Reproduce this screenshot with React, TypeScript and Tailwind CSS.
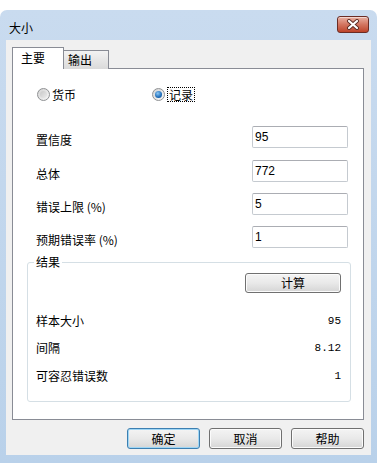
import React from 'react';

const cjk = "font-['Noto_Sans_CJK_SC','Noto_Sans_CJK_JP',sans-serif]";

function CloseButton() {
  return (
    <div className="mr-[2px] mt-[-2px] flex h-[17px] w-[32px] items-center justify-center rounded-[3px] border border-[#6b2c24] bg-gradient-to-b from-[#e8b0a2] via-[#d37560] to-[#bd4329] shadow-[inset_0_1px_0_rgba(255,255,255,0.5)]">
      <svg width="14" height="11" viewBox="0 0 14 11">
        <path d="M3 2 L11 9 M11 2 L3 9" stroke="#5a2a22" strokeWidth="4" strokeLinecap="round" />
        <path d="M3 2 L11 9 M11 2 L3 9" stroke="#ffffff" strokeWidth="2.2" strokeLinecap="round" />
      </svg>
    </div>
  );
}

function Radio({ checked }: { checked?: boolean }) {
  return (
    <div className="flex h-[13px] w-[13px] items-center justify-center rounded-full border border-[#8f9193] bg-gradient-to-br from-[#d4d4d4] to-[#f7f7f7]">
      {checked ? (
        <div className="h-[7px] w-[7px] rounded-full bg-[radial-gradient(circle_at_40%_35%,#8cc8f5,#1e6cb8_60%,#124a86)]" />
      ) : (
        <div className="h-[7px] w-[7px] rounded-full bg-gradient-to-br from-[#c8c8c8] to-[#ececec]" />
      )}
    </div>
  );
}

function Field({ label, value, className }: { label: string; value: string; className?: string }) {
  return (
    <div className={`flex h-[22px] items-start ${className ?? ''}`}>
      <span className="mt-[6px] w-[216px] leading-[16px]">{label}</span>
      <div className="flex h-[22px] w-[96px] items-center rounded-[2px] border border-[#c5cad0] border-t-[#abadb3] bg-white pl-[2px] font-['Liberation_Sans',sans-serif] text-[12px]">
        {value}
      </div>
    </div>
  );
}

function Button({ label, primary, className }: { label: string; primary?: boolean; className?: string }) {
  return (
    <div
      className={`flex items-center justify-center rounded-[3px] border bg-gradient-to-b from-[#f4f4f4] via-[#e9e9e9] to-[#d5d5d5] ${
        primary ? 'border-[#3c7fb1] shadow-[inset_0_0_0_1px_#9fd6f5]' : 'border-[#707070] shadow-[inset_0_0_0_1px_#fbfbfb]'
      } ${className ?? ''}`}
    >
      {label}
    </div>
  );
}

function ResultRow({ label, value, className }: { label: string; value: string; className?: string }) {
  return (
    <div className={`flex h-[16px] items-center justify-between leading-[16px] ${className ?? ''}`}>
      <span>{label}</span>
      <span className="font-['Liberation_Mono',monospace] text-[11px]">{value}</span>
    </div>
  );
}

export default function App() {
  return (
    <div className={`h-[463px] w-[377px] bg-white pt-[10px] text-[12px] text-black ${cjk}`}>
      <div className="flex h-[453px] flex-col rounded-t-[7px] bg-gradient-to-b from-[#c9dbef] to-[#b9d1ea] px-[6px] pb-[8px]">
        {/* title bar */}
        <div className="flex h-[30px] items-center justify-between">
          <span className="ml-[3px] mt-[5px] leading-[14px]">大小</span>
          <CloseButton />
        </div>

        {/* client area */}
        <div className="flex flex-1 flex-col bg-[#f0f0f0]">
          {/* tabs */}
          <div className="relative z-10 mb-[-1px] ml-[6px] mt-[7px] flex h-[22px] items-end">
            <div className="h-[22px] w-[52px] border border-b-0 border-[#898c95] bg-white pl-[8px] pt-[2px] leading-[16px]">
              主要
            </div>
            <div className="h-[19px] w-[45px] border border-b-0 border-l-0 border-[#898c95] bg-gradient-to-b from-[#f3f3f3] to-[#dadada] pl-[4px] leading-[17px]">
              输出
            </div>
          </div>

          {/* tab panel */}
          <div className="ml-[6px] flex h-[352px] w-[352px] flex-col border border-[#898c95] bg-white">
            <div className="ml-[24px] mt-[18px] flex h-[15px] items-center">
              <div className="flex w-[115px] items-center gap-[2px]">
                <Radio />
                <span className="leading-[15px]">货币</span>
              </div>
              <div className="flex items-center gap-[2px]">
                <Radio checked />
                <span className="border border-dotted border-black px-[1px] leading-[13px]">记录</span>
              </div>
            </div>

            <div className="ml-[23px] mt-[24px] flex flex-col">
              <Field label="置信度" value="95" />
              <Field label="总体" value="772" className="mt-[12px]" />
              <Field label="错误上限 (%)" value="5" className="mt-[11px]" />
              <Field label="预期错误率 (%)" value="1" className="mt-[11px]" />
            </div>

            <fieldset className="ml-[14px] mr-[12px] mt-[6px] rounded-[3px] border border-[#d5dfe5] pb-[17px] pl-[8px] pr-[9px]">
              <legend className="ml-[-2px] px-[2px] leading-[16px]">结果</legend>
              <div className="mt-[3px] flex justify-end">
                <Button label="计算" className="h-[20px] w-[96px]" />
              </div>
              <ResultRow label="样本大小" value="95" className="mt-[20px]" />
              <ResultRow label="间隔" value="8.12" className="mt-[11px]" />
              <ResultRow label="可容忍错误数" value="1" className="mt-[12px]" />
            </fieldset>
          </div>

          {/* dialog buttons */}
          <div className="mt-[8px] flex justify-end gap-[9px] pr-[7px]">
            <Button label="确定" primary className="h-[21px] w-[73px]" />
            <Button label="取消" className="h-[21px] w-[73px]" />
            <Button label="帮助" className="h-[21px] w-[73px]" />
          </div>
        </div>
      </div>
    </div>
  );
}
